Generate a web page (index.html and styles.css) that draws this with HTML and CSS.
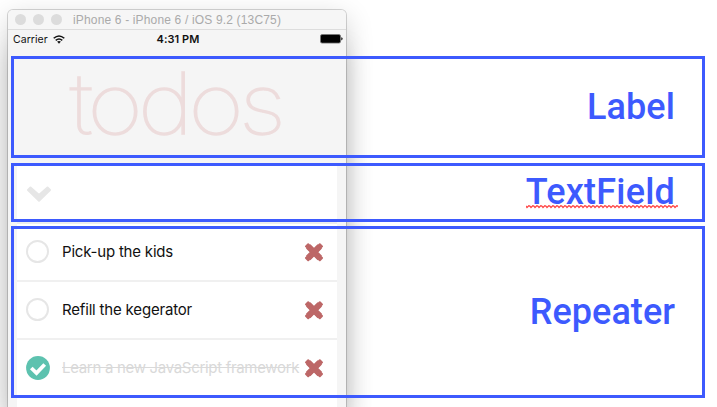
FILE: index.html
```html
<!DOCTYPE html>
<html lang="en">
<head>
<meta charset="utf-8">
<title>Todos components</title>
<link rel="stylesheet" href="styles.css">
</head>
<body>
<svg class="defs" aria-hidden="true">
  <symbol id="cross" viewBox="0 0 20 20"><path d="M4.2 4.4 15.8 16M15.8 4.4 4.2 16" fill="none" stroke="#bd6767" stroke-width="6.2"/><path d="M4.2 2.2 2 4.4 15.8 18.2 18 16zM15.8 2.2 18 4.4 4.2 18.2 2 16z" fill="#bd6767" stroke="#bd6767" stroke-width="2" stroke-linejoin="round"/></symbol>
</svg>
<main class="phone">
  <header class="titlebar">
    <i class="dot"></i><i class="dot"></i><i class="dot"></i>
    <span class="window-title">iPhone 6 - iPhone 6 / iOS 9.2 (13C75)</span>
  </header>
  <div class="status">
    <span class="carrier">Carrier
      <svg class="wifi" viewBox="0 0 12 9"><g fill="none" stroke="#111" stroke-width="1.5"><path d="M.7 3.3Q6-1.4 11.3 3.3M2.7 5.4Q6 2.5 9.3 5.4"/></g><path d="M4.1 6.6Q6 5.2 7.9 6.6L6 8.7z" fill="#111"/></svg>
    </span>
    <span class="clock">4:31 PM</span>
    <svg class="battery" viewBox="0 0 23 10"><rect x=".5" y=".5" width="20" height="8.6" rx="1.6" fill="#000" stroke="#777" stroke-width=".8"/><path d="M21.3 3.2q1.3.3 1.3 1.6t-1.3 1.6z" fill="#000"/></svg>
  </div>
  <h1 class="heading"><span>todos</span></h1>
  <section class="app">
    <div class="entry"><svg class="chevron" viewBox="0 0 26 18"><path d="M4.5 2.5 13 10 21.5 2.5 24 5 13 15.7 2 5z" fill="#e6e6e6" stroke="#e6e6e6" stroke-width="2" stroke-linejoin="round"/></svg></div>
    <div class="item"><i class="circle"></i><span class="text kids">Pick-up the kids</span><svg class="cross"><use href="#cross"/></svg></div>
    <div class="item"><i class="circle"></i><span class="text keg">Refill the kegerator</span><svg class="cross"><use href="#cross"/></svg></div>
    <div class="item last"><svg class="check" viewBox="0 0 24 24"><circle cx="12" cy="12" r="11.9" fill="#5dc2af"/><path d="m5.3 12 5.2 5 8.2-8.5" fill="none" stroke="#fff" stroke-width="3.8"/></svg><span class="text done">Learn a new JavaScript framework</span><svg class="cross"><use href="#cross"/></svg></div>
  </section>
</main>
<aside class="notes">
  <div class="note label"><span>Label</span></div>
  <div class="note field"><span>TextField</span><svg class="squiggle" viewBox="0 0 152 4"><defs><pattern id="wave" width="4" height="4" patternUnits="userSpaceOnUse"><path d="M-1 0 1 2.5 3 .5 5 2.5" fill="none" stroke="#ff4545" stroke-width="1.2"/></pattern></defs><rect width="152" height="4" fill="url(#wave)"/></svg></div>
  <div class="note repeater"><span>Repeater</span></div>
</aside>
</body>
</html>
```

FILE: styles.css
```css
* { box-sizing: border-box; }
body { margin: 0; width: 717px; height: 407px; overflow: hidden; position: relative; background: #fff; font-family: Inter, "Liberation Sans", sans-serif; display: flow-root; }
.defs { position: absolute; width: 0; height: 0; }
.phone { width: 338px; height: 397px; margin: 10px 0 0 8px; border-radius: 5px 5px 0 0; background: #f5f5f5; box-shadow: 0 0 0 1px rgba(0,0,0,.16), 0 40px 26px rgba(0,0,0,.17), 0 8px 28px rgba(0,0,0,.19); display: flow-root; }
.titlebar { height: 20px; display: flex; align-items: center; gap: 7px; padding-left: 7px; border-bottom: 1px solid #ddd; border-radius: 5px 5px 0 0; background: #f6f6f6; }
.dot { width: 11px; height: 11px; border-radius: 50%; background: #dcdcdc; }
.window-title { margin-left: 4px; color: #aaa; font-family: "Liberation Sans", sans-serif; font-size: 12px; letter-spacing: .16px; white-space: nowrap; }
.status { height: 18px; display: grid; grid-template-columns: 1fr auto 1fr; align-items: center; padding: 0 3px 0 5px; font-size: 11px; color: #111; }
.carrier { display: flex; align-items: center; gap: 5px; font-size: 10.5px; letter-spacing: .05px; }
.wifi { width: 12px; height: 9px; }
.clock { font-weight: 600; letter-spacing: .05px; }
.battery { width: 23px; height: 10px; justify-self: end; }
.heading { height: 117px; margin: 0; padding: 6px 7px 0 0; text-align: center; font-size: 85px; line-height: 100px; font-weight: 100; color: #eddcdc; }
.heading span { display: inline-block; letter-spacing: -4.6px; margin-right: -4.6px; transform: scaleX(1.13); -webkit-text-stroke: 1.3px #eddcdc; }
.app { margin: 0 9px; background: #fff; height: 242px; }
.entry { height: 59px; border-bottom: 2px solid #ededed; padding: 20px 0 0 9px; }
.chevron { display: block; width: 26px; height: 18px; }
.item { height: 58px; display: flex; align-items: center; padding: 0 13px 1px 9px; border-bottom: 2px solid #f0f0f0; }
.last { border-color: transparent; }
.circle { width: 23px; height: 23px; flex: none; border: 2px solid #e6e6e6; border-radius: 50%; }
.check { width: 24px; height: 24px; flex: none; margin-right: -1px; }
.text { flex: 1; min-width: 0; margin-left: 13px; font-size: 15px; color: #111; white-space: nowrap; }
.kids { letter-spacing: -.2px; }
.keg { letter-spacing: -.18px; }
.done { color: #d9d9d9; letter-spacing: -.31px; text-decoration: line-through; }
.cross { width: 20px; height: 20px; flex: none; }
.notes { position: absolute; left: 11px; top: 56px; width: 694px; display: flex; flex-direction: column; }
.note { border: 3px solid #3d5afe; padding-right: 27px; display: flex; justify-content: flex-end; align-items: center; color: #3d5afe; font: 500 36px/42px Roboto, sans-serif; position: relative; }
.label { height: 102px; margin-bottom: 5px; letter-spacing: .1px; }
.field { height: 59px; margin-bottom: 4px; padding-bottom: 2px; letter-spacing: .2px; }
.repeater { height: 172px; letter-spacing: .05px; }
.squiggle { position: absolute; width: 152px; height: 4px; right: 24px; top: 39px; }
```
